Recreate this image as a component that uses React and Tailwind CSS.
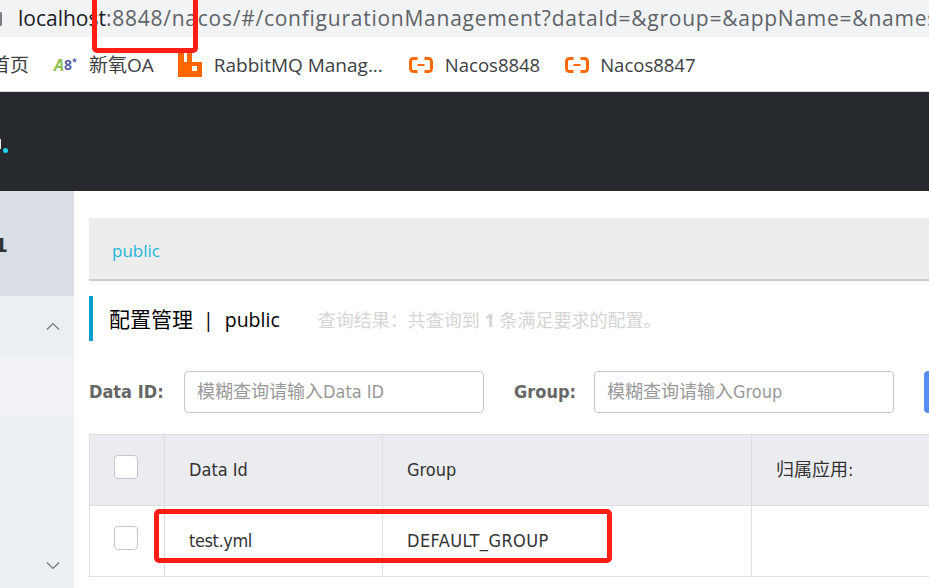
import React from 'react';

const SANS = 'font-["Open_Sans","Noto_Sans_CJK_SC",sans-serif]';
const BODY = 'font-["DejaVu_Sans_Condensed","Noto_Sans_CJK_SC",sans-serif]';

const CloudIcon = () => (
    <svg width="24" height="16" viewBox="0 0 24 16" className="shrink-0">
        <path d="M8.500 1.500H4.500C2.800 1.500 1.500 2.800 1.500 4.500V11.500C1.500 13.200 2.800 14.500 4.500 14.500H8.500" fill="none" stroke="#ff6a00" strokeWidth="3" />
        <path d="M15.500 1.500H19.500C21.200 1.500 22.500 2.800 22.500 4.500V11.500C22.500 13.200 21.200 14.500 19.500 14.500H15.500" fill="none" stroke="#ff6a00" strokeWidth="3" />
        <rect x="8.500" y="7" width="7" height="2" fill="#ff6a00" />
    </svg>
);

const RabbitIcon = () => (
    <svg width="24" height="24" viewBox="0 0 24 24" className="shrink-0">
        <path fillRule="evenodd" fill="#ff6600" d="M0 0H6V9H9V0H14V9H24V24H0ZM14 13V18H19V13Z" />
    </svg>
);

const Bookmark = ({ icon, label, className, textClass = 'text-[19px] ml-[12px]' }) => (
    <div className={`flex items-center ${className}`}>
        {icon}
        <span className={`text-[#3c4043] whitespace-nowrap ${textClass}`}>{label}</span>
    </div>
);

const Chevron = ({ up }) => (
    <svg width="14" height="8" viewBox="0 0 14 8">
        <path d={up ? 'M1 7.500L7 1.500L13 7.500' : 'M1 .5L7 6.500L13 .5'} fill="none" stroke="#73777e" strokeWidth="1.200" />
    </svg>
);

const Checkbox = () => (
    <div className="w-6 h-6 mb-[5px] bg-white border border-[#c4c6cf] rounded-[4px]" />
);

const Field = ({ label, placeholder, labelClass }) => (
    <div className="flex items-center">
        <span className={`pb-[2px] font-bold text-[18px] text-[#666666] whitespace-nowrap ${labelClass}`}>{label}</span>
        <div className="w-[300px] h-[42px] flex items-center pl-[12px] pb-[2px] bg-white border border-[#c4c6cf] rounded-[4px] text-[18px] text-[#999999] whitespace-nowrap">
            {placeholder}
        </div>
    </div>
);

export default function App() {
    return (
        <div className={`relative w-[929px] h-[588px] overflow-hidden bg-white ${SANS}`}>
            {/* browser address bar */}
            <div className="h-[37px] bg-[#f1f3f4] flex items-center whitespace-nowrap text-[21px] text-[#5f6368]">
                <div className="w-[4px] h-[14px] mr-[16px] border-2 border-l-0 border-[#7a7d81] rounded-r-full" />
                <span className="text-[#202124]">localhost</span>
                <span className="tracking-[0.75px]">:8848/nacos/#/configurationManagement?dataId=&amp;group=&amp;appName=&amp;namespace=</span>
            </div>

            {/* bookmarks */}
            <div className="h-[55px] pt-[2px] flex items-center border-b border-[#d6d6d6] whitespace-nowrap">
                <span className="ml-[-9px] w-[38px] text-[19px] text-[#3c4043]">首页</span>
                <div className="ml-[25px] w-[24px] flex items-center font-bold leading-none">
                    <span className="text-[#8cc152] italic text-[16px]">A</span>
                    <span className="text-[#5a5fa8] text-[14px]">8</span>
                    <span className="text-[#5a5fa8] text-[9px] mb-2">*</span>
                </div>
                <Bookmark label="新氧OA" className="ml-[-1px]" />
                <Bookmark icon={<RabbitIcon />} label="RabbitMQ Manag..." className="ml-[24px]" />
                <Bookmark icon={<CloudIcon />} label="Nacos8848" textClass="text-[18.500px] ml-[12px]" className="ml-[26px]" />
                <Bookmark icon={<CloudIcon />} label="Nacos8847" textClass="text-[18.500px] ml-[11px]" className="ml-[25px]" />
            </div>

            {/* console header, only the end of the logo is in view */}
            <div className="h-[99px] bg-[#262a2e] flex items-center">
                <div className="w-[1px] h-[10px] mt-[4px] bg-[#e8e8e8]" />
                <div className="mt-[17px] ml-[2px] w-[5px] h-[5px] rounded-full bg-[#1fd3f0]" />
            </div>

            <div className="flex h-[397px]">
                {/* side menu */}
                <aside className="w-[74px] shrink-0 flex flex-col bg-[#ebeef2]">
                    <div className="h-[105px] bg-[#d9dde4] flex items-center">
                        <span className="ml-[-6px] mt-[2px] font-['DejaVu_Sans'] text-[20px] font-bold text-[#333333]">1</span>
                    </div>
                    <div className="h-[60px] flex items-center justify-end pr-[14px]">
                        <Chevron up />
                    </div>
                    <div className="h-[60px] bg-[#f1f3f7]" />
                    <div className="flex-1 flex items-end justify-end pr-[14px] pb-[18px]">
                        <Chevron />
                    </div>
                </aside>

                {/* main content */}
                <main className={`flex-1 min-w-0 pl-[15px] pt-[27px] ${BODY}`}>
                    <div className={`h-[63px] bg-[#ededed] border-b-2 border-[#cccccc] flex items-center pl-[23px] pt-[4px] text-[17px] text-[#1fb6d8] ${SANS}`}>
                        public
                    </div>

                    <div className={`mt-[15px] h-[45px] pt-[3px] border-l-4 border-[#09a0d0] pl-[16px] flex items-center whitespace-nowrap ${SANS}`}>
                        <span className="text-[21px] text-black">配置管理</span>
                        <span className="text-[19.500px] text-black ml-[10px]">|</span>
                        <span className="text-[19.500px] text-black ml-[11px]">public</span>
                        <span className="text-[18px] text-[#d5d5d5] ml-[38px]">
                            查询结果：共查询到 <strong>1</strong> 条满足要求的配置。
                        </span>
                    </div>

                    <div className="mt-[30px] flex items-center">
                        <Field label="Data ID:" placeholder="模糊查询请输入Data ID" labelClass="w-[95px]" />
                        <Field label="Group:" placeholder="模糊查询请输入Group" labelClass="ml-[30px] w-[80px]" />
                        <div className="ml-[30px] w-[40px] h-[42px] bg-[#5a8cf5] rounded-l-[4px] shrink-0" />
                    </div>

                    <table className="mt-[21px] w-[900px] table-fixed border-collapse text-[18px] text-[#333333]">
                        <colgroup>
                            <col className="w-[75px]" />
                            <col className="w-[218px]" />
                            <col className="w-[369px]" />
                            <col className="w-[238px]" />
                        </colgroup>
                        <thead>
                            <tr className="h-[71px] bg-[#ebecf0]">
                                <th className="border border-[#dcdee3] pl-[24px] pb-[2px] font-normal">
                                    <Checkbox />
                                </th>
                                <th className="border border-[#dcdee3] pl-[24px] pb-[2px] text-left font-normal">Data Id</th>
                                <th className="border border-[#dcdee3] pl-[24px] pb-[2px] text-left font-normal">Group</th>
                                <th className="border border-[#dcdee3] pl-[24px] pb-[2px] text-left font-normal">归属应用:</th>
                            </tr>
                        </thead>
                        <tbody>
                            <tr className="h-[71px]">
                                <td className="border border-[#dcdee3] pl-[24px] pb-[2px]">
                                    <Checkbox />
                                </td>
                                <td className="border border-[#dcdee3] pl-[24px] pb-[2px] tracking-[-0.4px]">test.yml</td>
                                <td className="border border-[#dcdee3] pl-[24px] pb-[2px] tracking-[0.45px]">DEFAULT_GROUP</td>
                                <td className="border border-[#dcdee3]" />
                            </tr>
                        </tbody>
                    </table>
                </main>
            </div>

            {/* red annotation boxes drawn over the screenshot */}
            <div className="absolute left-[92px] top-[-6px] w-[106px] h-[59px] border-[5px] border-[#ff1e14] rounded-[5px]" />
            <div className="absolute left-[154px] top-[509px] w-[458px] h-[54px] border-[5px] border-[#ff1e14] rounded-[5px]" />
        </div>
    );
}
